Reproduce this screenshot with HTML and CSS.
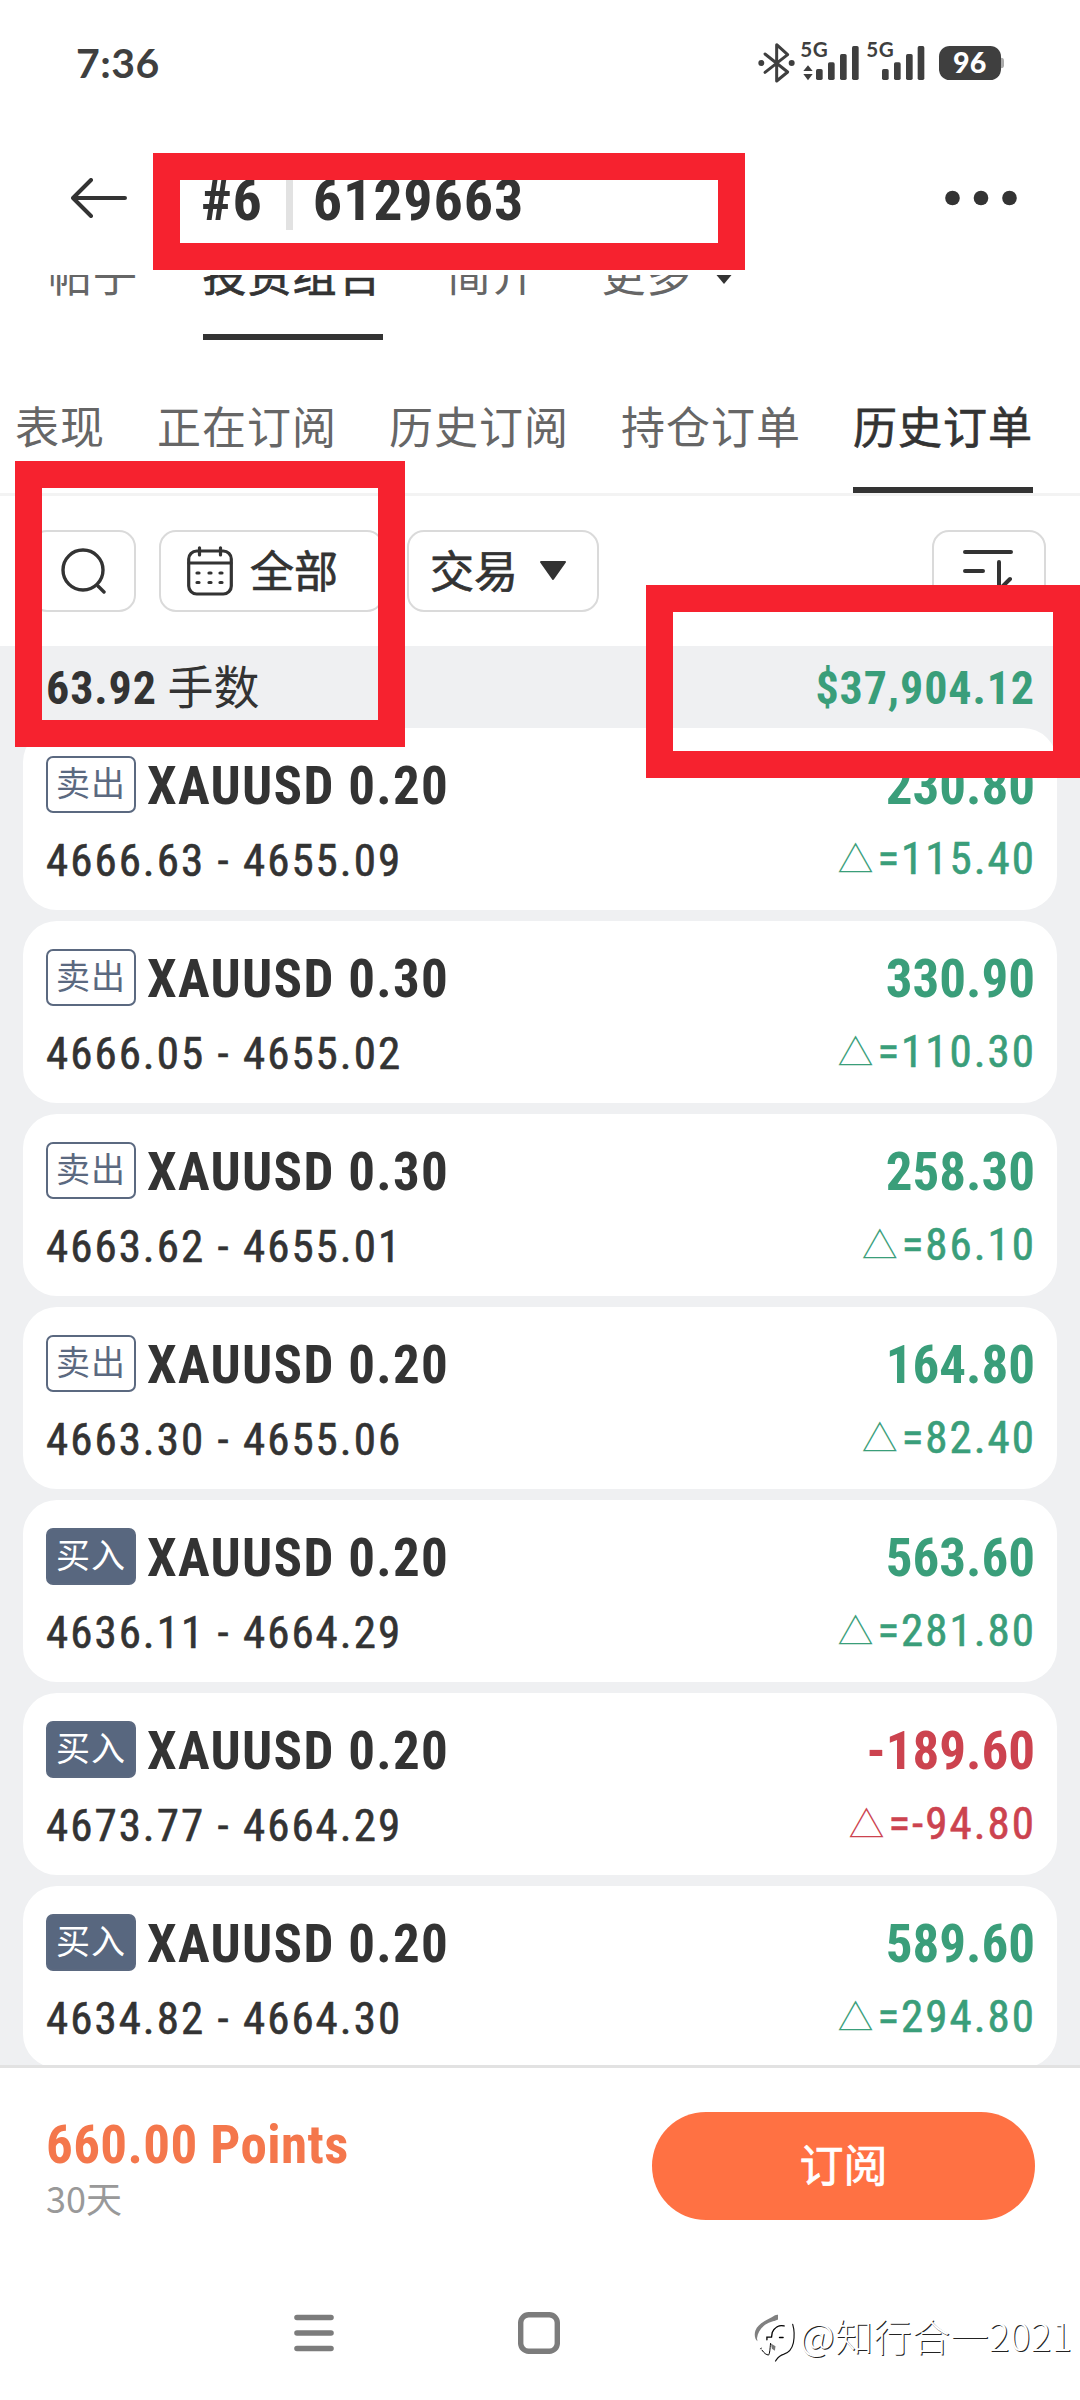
FILE: index.html
```html
<!DOCTYPE html>
<html lang="zh-CN">
<head>
<meta charset="utf-8">
<title>历史订单</title>
<link rel="stylesheet" href="styles.css">
</head>
<body>
<div class="screen">
  <div class="status">
    <span class="clock">7:36</span>
    <svg class="status-icons" viewBox="0 0 780 180">
      <g fill="none" stroke="#3f3f3f" stroke-width="9" stroke-linecap="round" stroke-linejoin="round">
        <path d="M45 57 113 111 80 138V29L113 59 45 112"/>
      </g>
      <g fill="#3f3f3f">
        <circle cx="34" cy="84" r="9"/><circle cx="125" cy="84" r="9"/>
        <path d="M160 108 174 91 188 108ZM160 117H188L174 136Z"/>
        <rect x="198" y="102" width="20" height="33" rx="5"/><rect x="234" y="82" width="20" height="53" rx="5"/><rect x="270" y="57" width="20" height="78" rx="5"/><rect x="306" y="33" width="20" height="102" rx="5"/>
        <rect x="396" y="102" width="20" height="33" rx="5"/><rect x="432" y="82" width="20" height="53" rx="5"/><rect x="468" y="57" width="20" height="78" rx="5"/><rect x="503" y="33" width="20" height="102" rx="5"/>
        <rect x="740" y="68" width="22" height="32" rx="9" fill="#aaa"/>
        <rect x="567" y="33" width="186" height="102" rx="32"/>
        <text class="net" x="151" y="66" textLength="82">5G</text>
        <text class="net" x="349" y="66" textLength="82">5G</text>
      </g>
      <text class="level" x="659" y="113" text-anchor="middle">96</text>
    </svg>
  </div>

  <div class="header">
    <svg class="back" viewBox="0 0 56 40"><path d="M20 2 2 20 20 38M2 20H54" fill="none" stroke="#333" stroke-width="4" stroke-linecap="round" stroke-linejoin="round"/></svg>
    <div class="title"><span>#6</span><i></i><span>6129663</span></div>
    <svg class="dots" viewBox="0 0 72 16"><g fill="#333"><circle cx="7.5" cy="8" r="7.3"/><circle cx="36" cy="8" r="7.3"/><circle cx="64.5" cy="8" r="7.3"/></g></svg>
  </div>

  <div class="tabs main-tabs">
    <span>帖子</span><span class="on">投资组合</span><span>简介</span><span>更多</span>
    <svg class="more" viewBox="0 0 16 14"><path d="M-2 0H18L8 12Z" fill="#333"/></svg>
  </div>
  <div class="tabs sub-tabs">
    <span>表现</span><span>正在订阅</span><span>历史订阅</span><span>持仓订单</span><span class="on">历史订单</span>
  </div>

  <div class="filters">
    <div class="btn search"><svg viewBox="0 0 46 46"><g fill="none" stroke="#333" stroke-width="3.4" stroke-linecap="round"><circle cx="22" cy="22" r="20"/><path d="M37 38 43 44"/></g></svg></div>
    <div class="btn cal">
      <svg viewBox="0 0 46 50"><g fill="none" stroke="#333" stroke-width="3.2" stroke-linecap="round"><rect x="1.7" y="5" width="42.6" height="43" rx="8"/><path d="M2 17H44M12.5 1.8V9M33.500 1.800V9"/><path d="M10 27H12M22 27H24M33 27H35M10 36.500H12M22 36.500H24M33 36.500H35"/></g></svg>
      <span>全部</span>
    </div>
    <div class="btn trade"><span>交易</span><svg viewBox="0 0 28 20"><path d="M2 1H26L14 18Z" fill="#333" stroke="#333" stroke-width="2" stroke-linejoin="round"/></svg></div>
    <div class="btn sort"><svg viewBox="0 0 52 46"><g fill="none" stroke="#333" stroke-width="4" stroke-linecap="round"><path d="M3 4H49M3 23H21M3 42H21M37 14V42L48 31"/></g></svg></div>
  </div>

  <div class="summary"><span><b>63.92</b> 手数</span><b class="up">$37,904.12</b></div>

  <div class="list">
    <div class="card">
      <div class="row"><span class="tag">卖出</span><b class="sym">XAUUSD 0.20</b><b class="val up">230.80</b></div>
      <div class="row2"><span>4666.63 - 4655.09</span><span class="delta up"><i>△</i>=115.40</span></div>
    </div>
    <div class="card">
      <div class="row"><span class="tag">卖出</span><b class="sym">XAUUSD 0.30</b><b class="val up">330.90</b></div>
      <div class="row2"><span>4666.05 - 4655.02</span><span class="delta up"><i>△</i>=110.30</span></div>
    </div>
    <div class="card">
      <div class="row"><span class="tag">卖出</span><b class="sym">XAUUSD 0.30</b><b class="val up">258.30</b></div>
      <div class="row2"><span>4663.62 - 4655.01</span><span class="delta up"><i>△</i>=86.10</span></div>
    </div>
    <div class="card">
      <div class="row"><span class="tag">卖出</span><b class="sym">XAUUSD 0.20</b><b class="val up">164.80</b></div>
      <div class="row2"><span>4663.30 - 4655.06</span><span class="delta up"><i>△</i>=82.40</span></div>
    </div>
    <div class="card">
      <div class="row"><span class="tag buy">买入</span><b class="sym">XAUUSD 0.20</b><b class="val up">563.60</b></div>
      <div class="row2"><span>4636.11 - 4664.29</span><span class="delta up"><i>△</i>=281.80</span></div>
    </div>
    <div class="card">
      <div class="row"><span class="tag buy">买入</span><b class="sym">XAUUSD 0.20</b><b class="val down">-189.60</b></div>
      <div class="row2"><span>4673.77 - 4664.29</span><span class="delta down"><i>△</i>=-94.80</span></div>
    </div>
    <div class="card">
      <div class="row"><span class="tag buy">买入</span><b class="sym">XAUUSD 0.20</b><b class="val up">589.60</b></div>
      <div class="row2"><span>4634.82 - 4664.30</span><span class="delta up"><i>△</i>=294.80</span></div>
    </div>
  </div>

  <div class="footer">
    <div class="price"><b>660.00 Points</b><span>30天</span></div>
    <div class="subscribe">订阅</div>
  </div>

  <div class="nav">
    <svg class="menu" viewBox="0 0 40 38"><path d="M3 3.500H37M3 19H37M3 34.500H37" stroke="#7c7c7c" stroke-width="5.600" stroke-linecap="round"/></svg>
    <svg class="home" viewBox="0 0 42 42"><rect x="2.700" y="2.700" width="36.600" height="36.600" rx="8" fill="none" stroke="#7c7c7c" stroke-width="5.400"/></svg>
    <svg class="return" viewBox="36 60 75 96"><path d="M112 69C118 73 116 80 108 84C85 94 62 110 50 148C42 142 39 130 43 116C52 92 80 84 102 70C106 68 109 67 112 69Z" fill="#808080"/></svg>
  </div>

  <div class="mark box-title"></div>
  <div class="mark box-lots"></div>
  <div class="mark box-profit"></div>
  <div class="watermark">
    <svg viewBox="50 95 125 130"><g fill="none" stroke-linecap="round">
      <path d="M52 150C56 120 80 100 115 96C140 94 160 104 162 130V165C158 185 145 197 128 200L108 219 104 200C80 205 56 185 52 150Z" fill="#fff"/>
      <path d="M62 182 66 180" stroke="#444" stroke-width="3"/>
      <path d="M67 186C74 196 80 200 87 201C91 195 91 184 93 166" stroke="#000" stroke-width="3"/>
      <path d="M94 166 108 174 106 188 97 182Z" fill="#777"/>
      <path d="M134 113C119 109 105 117 98 133L96 147H82V155" stroke="#000" stroke-width="4"/>
      <path d="M120 148H131" stroke="#000" stroke-width="4"/>
      <path d="M160 108C165 125 165 148 162 164C158 182 148 194 132 199C119 202 116 208 108 219" stroke="#111" stroke-width="3.500"/>
    </g></svg>
    <span>@知行合一2021</span>
  </div>
</div>
</body>
</html>
```
FILE: styles.css
```css
* { box-sizing: border-box; }
body { margin: 0; background: #fff; }
svg { display: block; flex: none; }
i { font-style: normal; }

.screen {
  position: relative;
  display: flex;
  flex-direction: column;
  width: 1080px;
  height: 2400px;
  overflow: hidden;
  background: #fff;
  color: #333;
  font-family: Roboto, "Noto Sans CJK SC", sans-serif;
  font-stretch: 87.5%;
}

/* status bar */
.status { display: flex; justify-content: space-between; height: 126px; padding: 35px 70px 0 76px; }
.clock { font: 700 41px/56px Lato, sans-serif; color: #3f3f3f; letter-spacing: .5px; }
.status-icons { width: 260px; height: 60px; }
.net { font: 700 62px Lato, sans-serif; }
.level { font: 900 86px Lato, sans-serif; fill: #fff; }

/* title bar */
.header { display: flex; align-items: center; height: 149px; padding: 0 63px 5px 71px; }
.back { width: 56px; height: 40px; }
.title { display: flex; align-items: center; margin: 4px auto 0 74px; font-size: 58px; font-weight: 700; letter-spacing: .9px; line-height: 70px; }
.title i { width: 7px; height: 56px; margin: 4px 20px 0 23px; background: #e2e2e2; }
.dots { width: 72px; height: 16px; }

/* tabs */
.tabs { display: flex; font: 400 44px/66px "Noto Sans CJK SC", sans-serif; letter-spacing: 1px; color: #666; white-space: nowrap; }
.tabs span { flex: none; border-bottom: 6px solid transparent; }
.tabs .on { color: #333; border-color: #333; -webkit-text-stroke: .7px #333; }
.main-tabs { align-items: flex-end; height: 65px; padding-left: 48px; gap: 64.500px; overflow: hidden; }
.main-tabs span { height: 100px; }
.more { width: 16px; height: 14px; margin: 0 0 54px -40px; }
.sub-tabs { align-items: flex-end; justify-content: flex-end; height: 156px; padding-right: 47px; gap: 52px; border-bottom: 3px solid #f3f3f3; }
.sub-tabs span { height: 101px; }

/* filters */
.filters { display: flex; height: 150px; padding: 34px 34px 0 30px; gap: 23px; font: 400 44px/72px "Noto Sans CJK SC", sans-serif; -webkit-text-stroke: .7px #333; }
.filters span { margin-top: -5px; }
.btn { display: flex; align-items: center; height: 82px; border: 2.5px solid #dadada; border-radius: 17px; }
.search { width: 106px; padding-left: 29px; }
.search svg { width: 46px; height: 46px; }
.cal { width: 225px; padding-left: 26px; gap: 17px; }
.cal svg { width: 46px; height: 50px; }
.trade { width: 192px; padding-left: 21px; gap: 21px; }
.trade svg { width: 28px; height: 20px; }
.sort { width: 114px; margin-left: auto; padding-left: 28px; }
.sort svg { width: 52px; height: 46px; }

/* totals */
.summary { display: flex; justify-content: space-between; height: 82px; padding: 0 45px 0 46px; background: #eff0f2; font-size: 46px; line-height: 84px; }
.summary b { letter-spacing: .9px; }
.up { color: #3a9e7a; }
.down { color: #cc434f; }

/* orders */
.list { display: flex; flex-direction: column; gap: 11px; height: 1337px; padding: 0 23px; overflow: hidden; background: #eff0f2; }
.card { flex: none; height: 182px; padding: 22px 22px 0 23px; border-radius: 34px; background: #fff; }
.row { display: flex; align-items: center; height: 68px; font-size: 53px; line-height: 64px; }
.tag { width: 90px; height: 57px; border: 2.5px solid #5b6980; border-radius: 7px; font: 400 34px/47px "Noto Sans CJK SC", sans-serif; letter-spacing: 1px; text-align: center; color: #5b6980; }
.buy { background: #58677f; color: #fff; }
.sym { padding-top: 4px; margin-left: 11px; letter-spacing: 1.3px; }
.val { margin-left: auto; padding-top: 4px; }
.row2 { display: flex; justify-content: space-between; margin-top: 13px; font-size: 45px; font-weight: 400; line-height: 60px; letter-spacing: 2px; -webkit-text-stroke: .6px currentColor; }
.delta { display: flex; margin: -2px -1px 0 0; }
.delta i { margin-right: 4px; font: 350 36px/56px "Noto Sans CJK SC", sans-serif; letter-spacing: 0; -webkit-text-stroke: 0; }

/* purchase bar */
.footer { display: flex; justify-content: space-between; height: 180px; padding: 44px 45px 0 46px; border-top: 3px solid #e2e2e2; }
.price { display: flex; flex-direction: column; color: #f4774c; font-size: 53px; line-height: 66px; }
.price b { letter-spacing: .4px; }
.price span { font: 400 36px/38px "Noto Sans CJK SC", sans-serif; color: #999; }
.subscribe { width: 383px; height: 108px; border-radius: 54px; background: #ff7143; color: #fff; font: 400 44px/103px "Noto Sans CJK SC", sans-serif; -webkit-text-stroke: .7px #fff; text-align: center; }

/* system navigation */
.nav { display: flex; height: 155px; padding: 67px 0 0 294px; }
.menu { width: 40px; height: 38px; margin-top: 2px; }
.home { width: 42px; height: 42px; margin-left: 184px; }
.return { width: 25px; height: 32px; margin-left: 193px; }

/* highlight frames drawn over the page */
.mark { position: absolute; border: 27px solid #f6222f; }
.box-title { left: 153px; top: 153px; width: 592px; height: 117px; }
.box-lots { left: 15px; top: 461px; width: 390px; height: 286px; }
.box-profit { left: 646px; top: 585px; width: 434px; height: 193px; }

.watermark { position: absolute; left: 756px; top: 2307px; display: flex; align-items: center; }
.watermark svg { width: 42px; height: 43px; margin-top: 13px; }
.watermark span { margin-left: 2px; font: 300 38px/56px "Noto Sans CJK SC", sans-serif; letter-spacing: .5px; color: #fff; text-shadow: 1px 1px 0 #222; white-space: nowrap; }
```
